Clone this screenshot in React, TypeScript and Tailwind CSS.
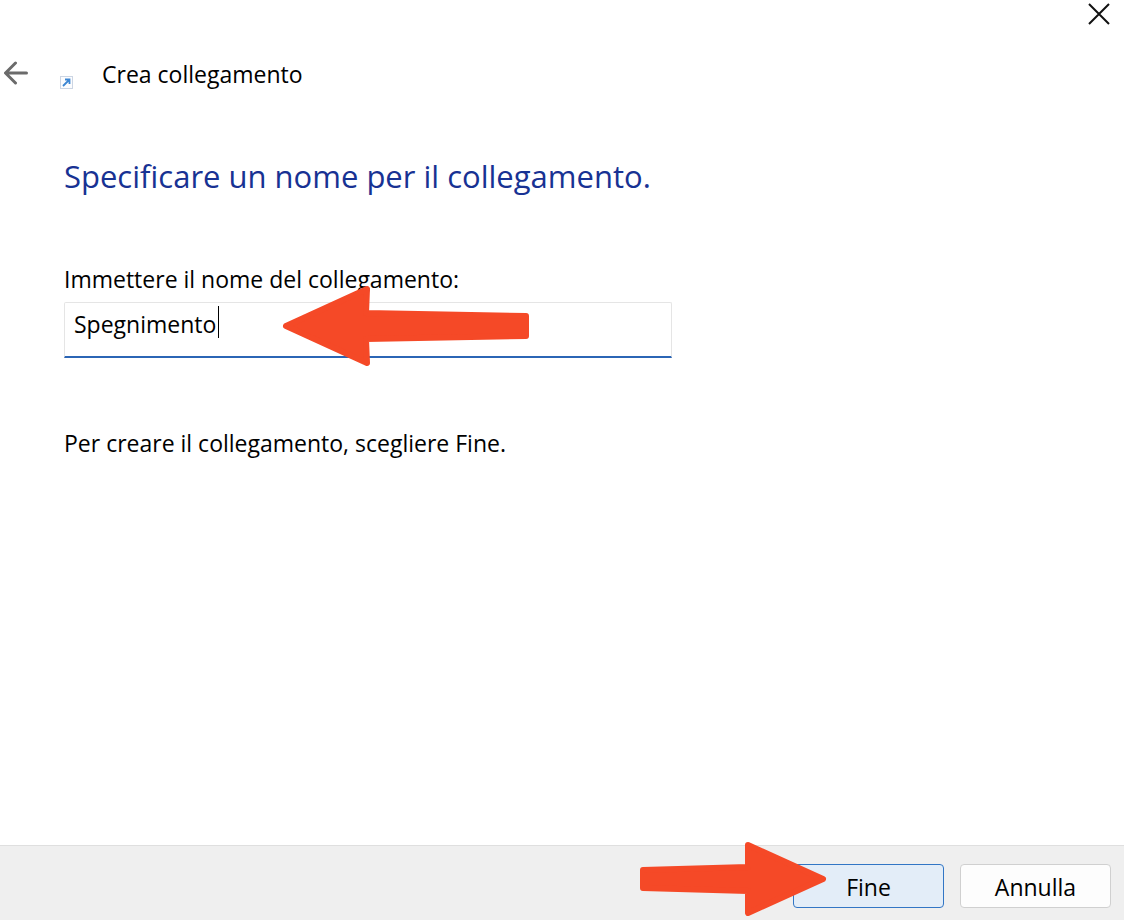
import { JSX, useState } from "react"

function ArrowLeft(): JSX.Element {
  return (
    <svg
      className="pointer-events-none absolute left-[218px] -top-[17px] h-[82px] w-[248px]"
      viewBox="0 0 248 82"
      fill="#f54927"
      stroke="#f54927"
      strokeWidth="6"
      strokeLinejoin="round"
      aria-hidden="true"
    >
      <path d="M4 41 L85 4 L84 28 L244 31 V51 L84 54 L85 78 Z" />
    </svg>
  )
}

function ArrowRight(): JSX.Element {
  return (
    <svg
      className="pointer-events-none absolute -left-[154px] -top-[23px] h-[76px] w-[188px]"
      viewBox="0 0 188 76"
      fill="#f54927"
      stroke="#f54927"
      strokeWidth="6"
      strokeLinejoin="round"
      aria-hidden="true"
    >
      <path d="M4 29 L109 26 V4 L184 38 L109 72 V50 L4 47 Z" />
    </svg>
  )
}

export default function App(): JSX.Element {
  const [name, setName] = useState<string>("Spegnimento")

  return (
    <div className="flex min-h-screen flex-col bg-white font-['Open_Sans',sans-serif] text-[23px] leading-8 text-black">
      <div className="flex h-[52px] justify-end">
        <button type="button" aria-label="Chiudi" className="h-[28px] w-[50px]">
          <svg className="mx-auto h-[22px] w-[22px]" viewBox="0 0 22 22" fill="none" stroke="#111" strokeWidth="2" aria-hidden="true">
            <path d="M1 1 L21 21 M21 1 L1 21" />
          </svg>
        </button>
      </div>

      <header className="flex h-11 items-center">
        <button type="button" aria-label="Indietro" className="w-[60px] pb-[3px] pl-1">
          <svg
            className="block h-6 w-6"
            viewBox="0 0 24 24"
            fill="none"
            stroke="#6b6b6b"
            strokeWidth="3"
            strokeLinecap="round"
            strokeLinejoin="round"
            aria-hidden="true"
          >
            <path d="M22.5 12 H2 M11.5 2 L1.5 12 L11.5 22" />
          </svg>
        </button>
        <svg className="mt-4 h-[13px] w-[13px]" viewBox="0 0 13 13" fill="none" aria-hidden="true">
          <rect x="0.5" y="0.5" width="12" height="12" fill="#fbfcfe" stroke="#ccd5e3" />
          <path d="M3 10 L9 4 M5 3.5 H9.5 V8" stroke="#3c86d3" strokeWidth="1.8" />
        </svg>
        <span className="ml-[29px]">Crea collegamento</span>
      </header>

      <main className="flex-1 px-16 pt-[58px]">
        <h1 className="text-[31px] leading-[44px] text-[#183293]">Specificare un nome per il collegamento.</h1>

        <label htmlFor="shortcut-name" className="mt-[65px] block">
          Immettere il nome del collegamento:
        </label>
        <div className="relative mt-[7px] max-w-[608px]">
          <input
            id="shortcut-name"
            type="text"
            value={name}
            onChange={(e) => setName(e.target.value)}
            className="block h-14 w-full rounded-t-xs border border-b-2 border-[#e5e5e5] border-b-[#2b65b5] pb-3 pl-[9px] outline-none"
          />
          <span className="absolute left-[154px] top-1 h-8 w-px bg-black" />
          <ArrowLeft />
        </div>

        <p className="mt-[69px]">Per creare il collegamento, scegliere Fine.</p>
      </main>

      <footer className="flex justify-end gap-4 border-t border-[#dfdfdf] bg-[#efefef] pb-3 pl-4 pr-[13px] pt-[18px]">
        <div className="relative">
          <button type="button" className="block h-11 w-[151px] rounded border border-[#3276c5] bg-[#e3edf8] pt-0.5">
            Fine
          </button>
          <ArrowRight />
        </div>
        <button type="button" className="block h-11 w-[151px] rounded border border-[#d0d0d0] bg-[#fdfdfd] pt-0.5">
          Annulla
        </button>
      </footer>
    </div>
  )
}
